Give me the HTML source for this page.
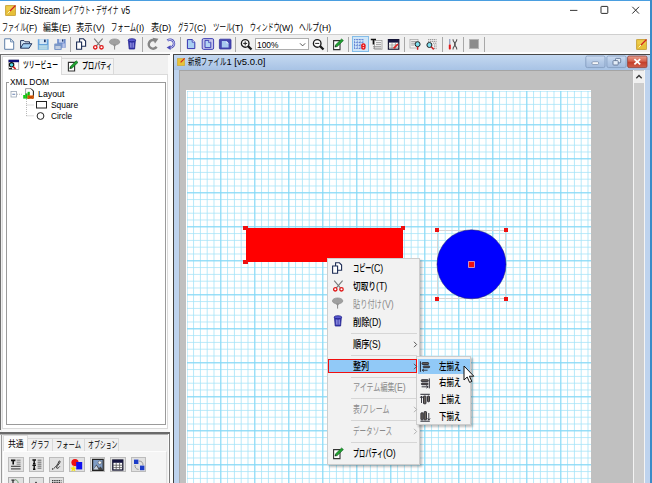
<!DOCTYPE html><html lang="ja"><head><meta charset="utf-8"><title>biz-Stream レイアウト・デザイナ v5</title><style>
html,body{margin:0;padding:0}body{width:652px;height:483px;overflow:hidden;position:relative;background:#f0f0f0;font-family:"Liberation Sans","Noto Sans CJK JP",sans-serif}
#w{position:absolute;left:0;top:0;width:652px;height:483px;overflow:hidden}
#w div,#w svg{position:absolute}
.t{position:absolute;white-space:pre;line-height:14px;height:14px}
.r{display:inline-block;height:14px;vertical-align:top;position:relative}
.r i{font-style:normal;position:absolute;left:0;top:0;transform-origin:0 50%;white-space:pre}
</style></head><body><div id="w">
<div style="left:0px;top:0px;width:652px;height:34px;background:#fff;"></div>
<div style="left:0px;top:0px;width:652px;height:1px;background:#4a9ee0;"></div>
<div style="left:0px;top:34px;width:652px;height:1px;background:#cfcfcf;"></div>
<div style="left:0px;top:35px;width:652px;height:17px;background:#f0f0f0;"></div>
<div style="left:0px;top:52px;width:652px;height:3px;background:#fcfcfc;"></div>
<div style="left:0px;top:53.5px;width:170.2px;height:1.3px;background:#707070;"></div>
<div style="left:172.9px;top:53.5px;width:478px;height:1.3px;background:#484848;"></div>
<svg style="left:5px;top:5px" width="11" height="11" viewBox="0 0 11 11"><rect x="0.3" y="0.3" width="10.4" height="10.4" rx="1.2" fill="#e6bf38" stroke="#b48c28" stroke-width="0.7"/><rect x="1.4" y="1.4" width="8.2" height="4" fill="#f0d050" opacity="0.8"/><path d="M5 6 L10.5 0.5" stroke="#d02020" stroke-width="1.3"/><path d="M2.6 8.4 L5 6" stroke="#fff6c0" stroke-width="1"/></svg>
<svg style="left:560px;top:0px" width="92" height="22" viewBox="0 0 92 22"><path d="M10 10.4 H17.4" stroke="#222" stroke-width="0.9"/><rect x="41" y="6.4" width="6.8" height="7" rx="0.6" fill="none" stroke="#222" stroke-width="0.95"/><path d="M72.3 6.8 L79 13.6 M79 6.8 L72.3 13.6" stroke="#222" stroke-width="0.95"/></svg>
<div style="left:0px;top:55px;width:1.4px;height:378px;background:#707070;"></div>
<div style="left:2px;top:55px;width:171px;height:428px;background:#f0f0f0;"></div>
<div style="left:2px;top:74px;width:166px;height:355px;background:#fff;border:1px solid #dadada;box-sizing:border-box"></div>
<div style="left:2px;top:55.5px;width:60px;height:19.5px;background:#fff;border:1px solid #dadada;border-bottom:none;box-sizing:border-box"></div>
<div style="left:62px;top:57.5px;width:52px;height:17px;background:#f4f4f4;border:1px solid #dadada;border-left:none;box-sizing:border-box"></div>
<div style="left:6px;top:82px;width:159.5px;height:343px;background:#fff;border:1px solid #9a9a9a;box-sizing:border-box;box-shadow:1px 1px 0 #fff, inset 1px 1px 0 #fff"></div>
<div style="left:9px;top:76px;width:41px;height:12px;background:#fff;"></div>
<svg style="left:8px;top:88px" width="44" height="34" viewBox="0 0 44 34"><path d="M9 6.25 H14.5 M18.5 11 V28 M18.5 17 H25.5 M18.5 27.8 H25.5" stroke="#a8a8a8" stroke-width="0.8" stroke-dasharray="1 1" fill="none"/><rect x="3" y="3.5" width="5.5" height="5.5" fill="#fff" stroke="#9aa5b5" stroke-width="0.8"/><path d="M4.3 6.25 H7.2" stroke="#4060a0" stroke-width="0.8"/><rect x="28.5" y="13.5" width="10" height="6.5" fill="#fff" stroke="#222" stroke-width="1"/><circle cx="32.5" cy="28" r="3.4" fill="#fff" stroke="#222" stroke-width="1"/></svg>
<div style="left:2px;top:429px;width:171px;height:4px;background:#f8f8f8;"></div>
<div style="left:0px;top:430px;width:1.4px;height:53px;background:#f4f4f4;"></div>
<div style="left:0px;top:432.4px;width:169.8px;height:1.4px;background:#6a6a6a;"></div>
<div style="left:0px;top:433.8px;width:169.8px;height:0.8px;background:#b0b0b0;"></div>
<div style="left:168.7px;top:433px;width:1px;height:50px;background:#8a8a8a;"></div>
<div style="left:1.2px;top:434.5px;width:1px;height:49px;background:#9a9a9a;"></div>
<div style="left:2.2px;top:434.5px;width:166.5px;height:49px;background:#f0f0f0;"></div>
<div style="left:3px;top:435.3px;width:25px;height:17px;background:#fbfbfb;border:1px solid #dcdcdc;border-bottom:none;box-sizing:border-box"></div>
<div style="left:28px;top:437.6px;width:25px;height:13.4px;background:#f0f0f0;border:1px solid #d8d8d8;border-left:none;border-bottom:none;box-sizing:border-box"></div>
<div style="left:53px;top:437.6px;width:31.5px;height:13.4px;background:#f0f0f0;border:1px solid #d8d8d8;border-left:none;border-bottom:none;box-sizing:border-box"></div>
<div style="left:84.5px;top:437.6px;width:34.8px;height:13.4px;background:#f0f0f0;border:1px solid #d8d8d8;border-left:none;border-bottom:none;box-sizing:border-box"></div>
<div style="left:3px;top:451px;width:164px;height:32px;background:#f5f5f5;border-top:1px solid #fdfdfd;border-left:1px solid #fdfdfd;border-right:1px solid #e0e0e0;box-sizing:border-box"></div>
<div style="left:8.1px;top:457.2px;width:15.5px;height:15.3px;background:#e1e1e1;border:1px solid #bcbcbc;box-sizing:border-box"></div>
<div style="left:28.5px;top:457.2px;width:15.5px;height:15.3px;background:#e1e1e1;border:1px solid #bcbcbc;box-sizing:border-box"></div>
<div style="left:48.9px;top:457.2px;width:15.5px;height:15.3px;background:#e1e1e1;border:1px solid #bcbcbc;box-sizing:border-box"></div>
<div style="left:69.4px;top:457.2px;width:15.5px;height:15.3px;background:#e1e1e1;border:1px solid #bcbcbc;box-sizing:border-box"></div>
<div style="left:89.8px;top:457.2px;width:15.5px;height:15.3px;background:#e1e1e1;border:1px solid #bcbcbc;box-sizing:border-box"></div>
<div style="left:110.3px;top:457.2px;width:15.5px;height:15.3px;background:#e1e1e1;border:1px solid #bcbcbc;box-sizing:border-box"></div>
<div style="left:130.7px;top:457.2px;width:15.5px;height:15.3px;background:#e1e1e1;border:1px solid #bcbcbc;box-sizing:border-box"></div>
<div style="left:8.1px;top:477.4px;width:15.5px;height:10px;background:#e1e1e1;border:1px solid #adadad;box-sizing:border-box"></div>
<div style="left:28.5px;top:477.4px;width:15.5px;height:10px;background:#e1e1e1;border:1px solid #adadad;box-sizing:border-box"></div>
<div style="left:48.9px;top:477.4px;width:15.5px;height:10px;background:#e1e1e1;border:1px solid #adadad;box-sizing:border-box"></div>
<svg style="left:8.1px;top:457.2px" width="15.5" height="15.3" viewBox="0 0 15.5 15.3"><path d="M3 3.4 H7.4 M5.2 3.4 V7.4" stroke="#111" stroke-width="1.6"/><path d="M8.6 3.2 H12.6 M8.6 5.2 H12.6 M8.6 7.2 H12.6" stroke="#777" stroke-width="0.9"/><path d="M3 9.4 H12.6 M3 11.8 H12.6" stroke="#555" stroke-width="1.3"/></svg>
<svg style="left:28.5px;top:457.2px" width="15.5" height="15.3" viewBox="0 0 15.5 15.3"><path d="M3.4 3 H7 M5.2 3 V6.4 M3.4 8.4 H7 M5.2 8.4 V12.2 M4 12.2 H6.4 M4 6.8 H6.4" stroke="#111" stroke-width="1.4"/><path d="M8.6 3.2 H12.4 M8.6 5.2 H12.4 M8.6 7.2 H12.4 M8.6 9.2 H12.4 M8.6 11.2 H12.4" stroke="#666" stroke-width="1"/></svg>
<svg style="left:48.9px;top:457.2px" width="15.5" height="15.3" viewBox="0 0 15.5 15.3"><path d="M4.6 11.6 C7 10 9.4 6.4 9.8 4.6 C10.2 3.2 11.6 4 10.8 5.6 C9.8 7.6 7.2 9.6 7.6 11 C8 12 10 10.6 10.8 9.4" fill="none" stroke="#222" stroke-width="0.9"/><circle cx="3.6" cy="12" r="0.7" fill="#222"/></svg>
<svg style="left:69.4px;top:457.2px" width="15.5" height="15.3" viewBox="0 0 15.5 15.3"><circle cx="6" cy="5.6" r="3.6" fill="#f01010"/><rect x="7.2" y="5" width="6" height="7.4" fill="#1010f0"/><path d="M4.4 8.4 L5.3 10.6 L7.6 10.8 L5.8 12.2 L6.4 14.4 L4.4 13.2 L2.4 14.4 L3 12.2 L1.2 10.8 L3.5 10.6 Z" fill="#f8e810"/></svg>
<svg style="left:89.8px;top:457.2px" width="15.5" height="15.3" viewBox="0 0 15.5 15.3"><rect x="2.6" y="2.4" width="10.6" height="11" fill="#7f9cc4" stroke="#222" stroke-width="1.2"/><circle cx="9.8" cy="5.6" r="1.7" fill="#f4f4f4" stroke="#444" stroke-width="0.5"/><path d="M2.8 13 L6.4 7.6 L9 11 L10.6 9.6 L13 13 Z" fill="#444"/><path d="M3.4 12.6 L6.4 8.6 L8.6 12.6 Z" fill="#c8d4e4"/></svg>
<svg style="left:110.3px;top:457.2px" width="15.5" height="15.3" viewBox="0 0 15.5 15.3"><rect x="2.8" y="3" width="10" height="10" fill="#fff" stroke="#151530" stroke-width="1.3"/><rect x="2.8" y="3" width="10" height="2.8" fill="#151540"/><path d="M2.8 8.2 H12.8 M2.8 10.6 H12.8 M6.2 5.8 V13 M9.6 5.8 V13" stroke="#555" stroke-width="0.8"/></svg>
<svg style="left:130.7px;top:457.2px" width="15.5" height="15.3" viewBox="0 0 15.5 15.3"><path d="M8 4 C11 4 12 6 12 8 M7.6 12.4 C4.6 12.4 4 10 4 8" fill="none" stroke="#999" stroke-width="1"/><rect x="3" y="2.6" width="4.4" height="4.4" fill="#1c3cc8"/><rect x="9" y="8.6" width="4.4" height="4.6" fill="#1c3cc8"/></svg>
<svg style="left:8.1px;top:477.4px" width="15.5" height="15.3" viewBox="0 0 15.5 15.3"><path d="M3.4 3.2 H6.6 M5 3.2 V8" stroke="#333" stroke-width="1.3"/><path d="M7 2.6 C9.6 3 10.4 5 10.4 8" stroke="#6a9a6a" stroke-width="1" fill="none"/></svg>
<svg style="left:28.5px;top:477.4px" width="15.5" height="15.3" viewBox="0 0 15.5 15.3"><path d="M7 4.6 L8.4 6.4 H5.6 Z" fill="#222"/></svg>
<svg style="left:48.9px;top:477.4px" width="15.5" height="15.3" viewBox="0 0 15.5 15.3"><path d="M3 3.6 H12.4 M3 5.6 H12.4" stroke="#333" stroke-width="1.1" stroke-dasharray="1.4 0.8"/></svg>
<div style="left:168.4px;top:55px;width:4.6px;height:428px;background:#fbfbfb;"></div>
<div style="left:168.6px;top:433px;width:1.1px;height:50px;background:#7a7a7a;"></div>
<div style="left:160px;top:432.4px;width:9.8px;height:1.4px;background:#6a6a6a;"></div>
<div style="left:172.9px;top:54.5px;width:1.4px;height:430px;background:#404040;"></div>
<div style="left:174.3px;top:54.8px;width:476px;height:430px;background:#bed3ee;"></div>
<div style="left:174.3px;top:54.8px;width:476px;height:15px;background:linear-gradient(#c4d8f0,#a8c3e5);"></div>
<div style="left:649.8px;top:54px;width:0.8px;height:430px;background:#9db6dc;"></div>
<div style="left:650.4px;top:0px;width:1.6px;height:483px;background:#3a8cc8;"></div>
<div style="left:179.4px;top:69.6px;width:453.8px;height:420px;background:#c0c0c0;border-top:1px solid #a4a4a4;border-left:1px solid #a8a8a8;box-sizing:border-box"></div>
<div style="left:633px;top:70.4px;width:11.7px;height:420px;background:#cdcdcd;border-left:1px solid #f4f4f4;border-right:1px solid #f4f4f4;box-sizing:border-box"></div>
<div style="left:634px;top:71px;width:10px;height:12px;background:#f0f0f0;"></div>
<svg style="left:634px;top:71px" width="10" height="12" viewBox="0 0 10 12"><path d="M2.3 7.2 L5 4.5 L7.7 7.2" stroke="#333" stroke-width="1.3" fill="none"/></svg>
<svg style="left:177.3px;top:58.2px" width="8" height="8" viewBox="0 0 11 11"><rect x="0.3" y="0.3" width="10.4" height="10.4" rx="1" fill="#e8c23a" stroke="#b8902a" stroke-width="0.6"/><path d="M5 6 L10.5 0.5" stroke="#d02020" stroke-width="1.5"/></svg>
<svg style="left:584px;top:55px" width="66" height="14" viewBox="0 0 66 14"><defs><linearGradient id="cb" x1="0" y1="0" x2="0" y2="1"><stop offset="0" stop-color="#cddcf1"/><stop offset="0.5" stop-color="#b3c9e6"/><stop offset="1" stop-color="#a3bbdd"/></linearGradient><linearGradient id="cr" x1="0" y1="0" x2="0" y2="1"><stop offset="0" stop-color="#eba391"/><stop offset="0.45" stop-color="#d4604c"/><stop offset="0.55" stop-color="#c4402c"/><stop offset="1" stop-color="#d0604c"/></linearGradient></defs><rect x="1.8" y="1" width="19.2" height="11.6" rx="1.6" fill="url(#cb)" stroke="#8099bd" stroke-width="0.8"/><rect x="8" y="6.8" width="6.6" height="2.6" rx="1" fill="#fff" stroke="#5a6f90" stroke-width="0.6"/><rect x="22.9" y="1" width="19.2" height="11.6" rx="1.6" fill="url(#cb)" stroke="#8099bd" stroke-width="0.8"/><rect x="31.5" y="3.4" width="5.2" height="4.4" rx="0.8" fill="#e4edf8" stroke="#55698a" stroke-width="0.8"/><rect x="29" y="5.6" width="5.2" height="4.4" rx="0.8" fill="#e4edf8" stroke="#55698a" stroke-width="0.8"/><rect x="43.6" y="1" width="19.4" height="11.6" rx="1.6" fill="url(#cr)" stroke="#8f4038" stroke-width="0.8"/><path d="M50.4 4.2 L56.2 9.4 M56.2 4.2 L50.4 9.4" stroke="#fff" stroke-width="1.8"/></svg>
<svg style="left:186px;top:90px" width="405" height="393" viewBox="0 0 405 393"><defs><pattern id="g1" x="0.3" y="0.3" width="6.8" height="6.8" patternUnits="userSpaceOnUse"><path d="M0 0 H6.8 M0 0 V6.8" stroke="#a4e3f8" stroke-width="1.6" fill="none"/></pattern><pattern id="g5" x="0.3" y="0.3" width="34.0" height="34.0" patternUnits="userSpaceOnUse"><path d="M0 0 H34.0 M0 0 V34.0" stroke="#82d7f6" stroke-width="1.8" fill="none"/></pattern></defs><rect width="405" height="393" fill="#fff"/><rect width="405" height="393" fill="url(#g1)"/><rect width="405" height="393" fill="url(#g5)"/><rect x="0" y="0" width="405" height="1" fill="#fff"/><rect x="0" y="0" width="1" height="393" fill="#fff"/></svg>
<div style="left:245.5px;top:228.2px;width:157.7px;height:33.5px;background:#ff0000;"></div>
<div style="left:243.2px;top:226.1px;width:4.4px;height:4.4px;background:#ee1010;"></div>
<div style="left:401.0px;top:226.1px;width:4.4px;height:4.4px;background:#ee1010;"></div>
<div style="left:243.2px;top:259.5px;width:4.4px;height:4.4px;background:#ee1010;"></div>
<div style="left:436.9px;top:229.8px;width:69.1px;height:69px;background:transparent;border:1px solid #d6d6d6;box-sizing:border-box"></div>
<svg style="left:436px;top:229px" width="72" height="72" viewBox="0 0 72 72"><circle cx="35.5" cy="35.3" r="34.5" fill="#0000ff" stroke="#202060" stroke-width="0.5"/></svg>
<div style="left:434.7px;top:227.6px;width:4.4px;height:4.4px;background:#ee1010;"></div>
<div style="left:503.8px;top:227.6px;width:4.4px;height:4.4px;background:#ee1010;"></div>
<div style="left:434.7px;top:296.5px;width:4.4px;height:4.4px;background:#ee1010;"></div>
<div style="left:503.8px;top:296.5px;width:4.4px;height:4.4px;background:#ee1010;"></div>
<div style="left:469.3px;top:262.2px;width:4.4px;height:4.4px;background:#ee1010;box-shadow:0 0 0 0.8px #ffb0b0"></div>
<div style="left:327.4px;top:258px;width:92.4px;height:206.6px;background:#f2f2f2;border:1px solid #cdcdcd;box-sizing:border-box;box-shadow:1.5px 1.5px 2px rgba(0,0,0,0.25)"></div>
<div style="left:351px;top:333.3px;width:66px;height:1px;background:#d6d6d6;"></div>
<div style="left:351px;top:355.0px;width:66px;height:1px;background:#d6d6d6;"></div>
<div style="left:351px;top:376.6px;width:66px;height:1px;background:#d6d6d6;"></div>
<div style="left:351px;top:398.3px;width:66px;height:1px;background:#d6d6d6;"></div>
<div style="left:351px;top:419.9px;width:66px;height:1px;background:#d6d6d6;"></div>
<div style="left:351px;top:441.6px;width:66px;height:1px;background:#d6d6d6;"></div>
<div style="left:415.8px;top:356.2px;width:55.6px;height:69px;background:#f2f2f2;border:1px solid #cdcdcd;box-sizing:border-box;box-shadow:1.5px 1.5px 2px rgba(0,0,0,0.25)"></div>
<div style="left:418px;top:358.7px;width:52px;height:15.8px;background:#91c9f7;"></div>
<div style="left:328.2px;top:358.7px;width:89.3px;height:14.7px;background:#91c9f7;border:1.7px solid #f01010;box-sizing:border-box"></div>
<svg style="left:412.6px;top:340.79999999999995px" width="5" height="7" viewBox="0 0 5 7"><path d="M1 0.8 L3.6 3.5 L1 6.2" stroke="#444" stroke-width="0.9" fill="none"/></svg>
<svg style="left:412.6px;top:362.5px" width="5" height="7" viewBox="0 0 5 7"><path d="M1 0.8 L3.6 3.5 L1 6.2" stroke="#444" stroke-width="0.9" fill="none"/></svg>
<svg style="left:412.6px;top:405.9px" width="5" height="7" viewBox="0 0 5 7"><path d="M1 0.8 L3.6 3.5 L1 6.2" stroke="#aaa" stroke-width="0.9" fill="none"/></svg>
<svg style="left:412.6px;top:427.59999999999997px" width="5" height="7" viewBox="0 0 5 7"><path d="M1 0.8 L3.6 3.5 L1 6.2" stroke="#aaa" stroke-width="0.9" fill="none"/></svg>
<div style="left:69.5px;top:36.5px;width:1px;height:15.5px;background:#a8a8a8;"></div>
<div style="left:141.8px;top:36.5px;width:1px;height:15.5px;background:#a8a8a8;"></div>
<div style="left:179.8px;top:36.5px;width:1px;height:15.5px;background:#a8a8a8;"></div>
<div style="left:235.0px;top:36.5px;width:1px;height:15.5px;background:#a8a8a8;"></div>
<div style="left:326.9px;top:36.5px;width:1px;height:15.5px;background:#a8a8a8;"></div>
<div style="left:348.3px;top:36.5px;width:1px;height:15.5px;background:#a8a8a8;"></div>
<div style="left:403.5px;top:36.5px;width:1px;height:15.5px;background:#a8a8a8;"></div>
<div style="left:441.6px;top:36.5px;width:1px;height:15.5px;background:#a8a8a8;"></div>
<div style="left:462.7px;top:36.5px;width:1px;height:15.5px;background:#a8a8a8;"></div>
<div style="left:483.9px;top:36.5px;width:1px;height:15.5px;background:#a8a8a8;"></div>
<svg style="left:3px;top:37px" width="13" height="14" viewBox="0 0 13 14"><path d="M1.7 1.8 H7.6 L10.7 4.9 V12.3 H1.7 Z" fill="#fff" stroke="#5f7fa8" stroke-width="1"/><path d="M7.6 1.8 V4.9 H10.7" fill="none" stroke="#5f7fa8" stroke-width="0.9"/></svg>
<svg style="left:19px;top:37px" width="14" height="14" viewBox="0 0 14 14"><path d="M1.6 11.2 V3.6 H5 L6 4.8 H10.5 V6.3" fill="#d8e8f8" stroke="#1c2c55" stroke-width="0.95"/><path d="M1.6 11.2 L4.2 6.7 H12.8 L10.1 11.2 Z" fill="#a4d0f4" stroke="#1c2c55" stroke-width="0.95" stroke-linejoin="round"/></svg>
<svg style="left:37px;top:38px" width="13" height="13" viewBox="0 0 13 13"><rect x="0.8" y="1.2" width="10.8" height="10.6" fill="#66a2dc"/><rect x="2.4" y="1.2" width="7.4" height="4.8" fill="#d4e6f6"/><rect x="7" y="1.6" width="1.7" height="2.6" fill="#1c3468"/><rect x="1.8" y="7" width="8.8" height="4.8" fill="#a9d0e2"/><path d="M2.6 8.6 H9.8 M2.6 10.2 H9.8" stroke="#c4e0ec" stroke-width="0.6"/></svg>
<svg style="left:53px;top:38px" width="14" height="13" viewBox="0 0 14 13"><rect x="4.2" y="1" width="8.4" height="8.8" fill="#6a8acc"/><rect x="5.8" y="1" width="5" height="3.6" fill="#c8d4ee"/><rect x="9" y="1.4" width="1.3" height="2.2" fill="#203a70"/><rect x="1.2" y="5.6" width="7.6" height="6.4" rx="1" fill="#7c98c8"/><rect x="2.4" y="8" width="5.2" height="3" fill="#c0cce0"/><rect x="9.4" y="5.4" width="2.4" height="4.4" fill="#b8c4e8"/></svg>
<svg style="left:75px;top:37px" width="13" height="14" viewBox="0 0 13 14"><path d="M4.6 1.8 H8.4 L10.6 4 V9.2 H4.6 Z" fill="#fff" stroke="#1c2c55" stroke-width="1.1"/><path d="M1.6 5 H6.6 V12.2 H1.6 Z" fill="#fff" stroke="#1c2c55" stroke-width="1.1"/></svg>
<svg style="left:92px;top:37px" width="13" height="14" viewBox="0 0 13 14"><path d="M2.2 1.6 L8.6 9.2 M10.6 1.6 L4.2 9.2" stroke="#7a7a7a" stroke-width="1.1" fill="none"/><circle cx="3.3" cy="10.3" r="1.7" fill="#fff" stroke="#e01818" stroke-width="1.3"/><circle cx="9.5" cy="10.3" r="1.7" fill="#fff" stroke="#e01818" stroke-width="1.3"/></svg>
<svg style="left:108px;top:38px" width="13" height="13" viewBox="0 0 13 13"><ellipse cx="6.6" cy="3.9" rx="5.2" ry="3" fill="#a0a0a0" stroke="#8a8a8a" stroke-width="0.6"/><path d="M4.6 6.4 L6.6 9 L8.6 6.4 Z" fill="#909090"/><path d="M6.6 8 V11.6" stroke="#888" stroke-width="1"/></svg>
<svg style="left:126px;top:37px" width="12" height="14" viewBox="0 0 12 14"><path d="M2.5 3.6 H9.3 L8.6 12 H3.2 Z" fill="#3a3ab0" stroke="#20208a" stroke-width="0.8"/><ellipse cx="5.9" cy="3.2" rx="3.8" ry="1.5" fill="#5a5ad0" stroke="#20208a" stroke-width="0.8"/><path d="M4.4 5.6 V10.6 M5.9 5.8 V10.8 M7.4 5.6 V10.6" stroke="#b0b0f0" stroke-width="0.7"/></svg>
<svg style="left:146px;top:37px" width="14" height="14" viewBox="0 0 14 14"><path d="M10.6 9.8 A4.3 4.3 0 1 1 8.8 3.4" fill="none" stroke="#858585" stroke-width="2.5"/><path d="M6.6 0.8 L12.4 1.8 L9 6.6 Z" fill="#858585"/></svg>
<svg style="left:164px;top:37px" width="13" height="14" viewBox="0 0 13 14"><path d="M3.4 3.6 A4 4 0 1 1 6.4 10.6" fill="none" stroke="#4a4ab8" stroke-width="2.4"/><path d="M3.4 3.6 A4 4 0 1 1 6.4 10.6" fill="none" stroke="#d8dcf6" stroke-width="0.9"/><path d="M6.6 8.2 L2.6 10.6 L6.6 13 Z" fill="#4a4ab8"/></svg>
<svg style="left:186px;top:38px" width="11" height="12" viewBox="0 0 11 12"><path d="M1.4 1.6 H6.2 L8.8 4.2 V10.6 H1.4 Z" fill="#a8cef2" stroke="#3434b0" stroke-width="1"/><path d="M6.2 1.6 V4.2 H8.8" fill="#e8f2fc" stroke="#3434b0" stroke-width="0.8"/></svg>
<svg style="left:201px;top:37px" width="14" height="14" viewBox="0 0 14 14"><rect x="1.2" y="1.6" width="11.4" height="10.8" rx="1.4" fill="#c4c4ea" stroke="#4444b4" stroke-width="1"/><path d="M4 3.4 H7.6 L9.8 5.6 V10.6 H4 Z" fill="#b4d4f4" stroke="#3434b0" stroke-width="0.9"/><path d="M7.6 3.4 V5.6 H9.8" fill="#e8f2fc" stroke="#3434b0" stroke-width="0.7"/></svg>
<svg style="left:218px;top:38px" width="14" height="12" viewBox="0 0 14 12"><rect x="1.4" y="1.2" width="11.6" height="9.8" rx="0.8" fill="#4646b0" stroke="#3434a0" stroke-width="0.8"/><path d="M3.8 3 H8.4 L10.6 5.2 V9.4 H3.8 Z" fill="#a8c8f0"/><path d="M8.4 3 V5.2 H10.6 Z" fill="#e8f0fc"/></svg>
<svg style="left:240px;top:38px" width="13" height="13" viewBox="0 0 13 13"><circle cx="5.2" cy="5.4" r="3.8" fill="#fff" stroke="#1a1a1a" stroke-width="1.35"/><path d="M3.2 5.4 H7.2 M5.2 3.4 V7.4" stroke="#222" stroke-width="1"/><path d="M8 8.2 L11.5 11.5" stroke="#1a1a1a" stroke-width="2.3"/></svg>
<div style="left:255px;top:37.6px;width:54px;height:12.8px;background:#fff;border:1px solid #adadad;box-sizing:border-box"></div>
<svg style="left:299px;top:42px" width="8" height="6" viewBox="0 0 8 6"><path d="M1 1.3 L3.6 3.9 L6.2 1.3" fill="none" stroke="#444" stroke-width="0.9"/></svg>
<svg style="left:312px;top:38px" width="13" height="13" viewBox="0 0 13 13"><circle cx="5.2" cy="5.4" r="3.8" fill="#fff" stroke="#1a1a1a" stroke-width="1.35"/><path d="M3.2 5.4 H7.2" stroke="#222" stroke-width="1"/><path d="M8 8.2 L11.5 11.5" stroke="#1a1a1a" stroke-width="2.3"/></svg>
<svg style="left:332px;top:37.5px" width="13" height="13" viewBox="0 0 13 13"><path d="M1.6 2.6 H8 V11.6 H1.6 Z" fill="#fff" stroke="#333" stroke-width="1.1"/><path d="M3 9 L3.6 6.8 L9.6 1 L11.4 2.6 L5.2 8.6 Z" fill="#20a030" stroke="#0a5a18" stroke-width="0.6"/><path d="M3 9 L3.4 7.4 L4.6 8.6 Z" fill="#222"/></svg>
<div style="left:351.8px;top:35.8px;width:17px;height:15.8px;background:#cfe6f8;border:1px solid #84bde9;box-sizing:border-box"></div>
<svg style="left:353px;top:38px" width="14" height="13" viewBox="0 0 14 13"><path d="M1.5 1.2 V11 M4.3 1.2 V11 M7.1 1.2 V11 M9.9 1.2 V11 M1.2 1.5 H10.4 M1.2 4.5 H10.4 M1.2 7.5 H10.4 M1.2 10.5 H10.4" stroke="#5a7ad0" stroke-width="0.9" stroke-dasharray="1 0.6" fill="none"/><rect x="8.2" y="5.2" width="4.4" height="6.6" rx="2.1" fill="#e81818"/><path d="M9.4 7.8 L10.4 6.6 L11.4 7.8 M9.4 9.2 L10.4 10.4 L11.4 9.2" fill="#fff"/></svg>
<svg style="left:370px;top:38px" width="13" height="13" viewBox="0 0 13 13"><rect x="4.6" y="2.4" width="7.4" height="8.8" fill="#f4f4f4" stroke="#9a9a9a" stroke-width="0.8"/><path d="M6 4.6 H11 M6 6.6 H11 M3 8.6 H11 M3 10.2 H11" stroke="#8a8a8a" stroke-width="0.8"/><path d="M0.8 1.6 H6 M3.4 1.6 V6.6" stroke="#111" stroke-width="1.5"/></svg>
<svg style="left:387px;top:38px" width="13" height="13" viewBox="0 0 13 13"><rect x="1.4" y="1.6" width="10.4" height="9.6" fill="#fff" stroke="#151530" stroke-width="1.2"/><rect x="1.4" y="1.6" width="10.4" height="3" fill="#151540"/><path d="M1.4 7 H11.8 M1.4 9.2 H11.8 M5 4.6 V11 M8.4 4.6 V11" stroke="#777" stroke-width="0.6"/><path d="M6.6 10.4 L11 6" stroke="#e02020" stroke-width="1.6"/></svg>
<svg style="left:409px;top:38px" width="13" height="13" viewBox="0 0 13 13"><rect x="1" y="1.6" width="8" height="8.4" fill="#f4f4f4" stroke="#a0a0a0" stroke-width="0.7"/><path d="M2.2 3.4 H7.6 M2.2 5.2 H6 M2.2 7 H5.4" stroke="#8a8a8a" stroke-width="0.8"/><circle cx="8.6" cy="6.2" r="2.5" fill="#7fe0f0" stroke="#222" stroke-width="1"/><path d="M8.6 8.8 V11.8" stroke="#d02020" stroke-width="1.4"/></svg>
<svg style="left:425px;top:38px" width="14" height="13" viewBox="0 0 14 13"><path d="M3 1.6 H11.6 M3 3.4 H11.6 M8 5.2 H11.6 M9 7 H11.6 M9 8.8 H11.6 M9 10.6 H11.6" stroke="#8a8a8a" stroke-width="0.9" stroke-dasharray="1.4 0.6"/><circle cx="4.4" cy="7" r="2.5" fill="#7fe0f0" stroke="#222" stroke-width="1"/><path d="M6.2 8.8 L8.8 11.4" stroke="#d02020" stroke-width="1.5"/></svg>
<svg style="left:447px;top:38px" width="12" height="13" viewBox="0 0 12 13"><path d="M2.8 1 V6.6" stroke="#6a7aa8" stroke-width="0.9"/><rect x="1.8" y="6.4" width="2" height="5" rx="0.6" fill="#e01818"/><path d="M6 1.2 C6 3.6 7 3.8 7.6 4.6 V7.8 C7 8.6 6 8.8 6 11.4 M9.8 1.2 C9.8 3.6 8.8 3.8 8.2 4.6 V7.8 C8.8 8.6 9.8 8.8 9.8 11.4" fill="none" stroke="#555" stroke-width="1.1"/></svg>
<div style="left:469px;top:39.1px;width:10.4px;height:9.7px;background:#8c8c8c;border:1px solid #b4b4b4;box-sizing:border-box"></div>
<svg style="left:636px;top:39px" width="11" height="11" viewBox="0 0 11 11"><rect x="0.3" y="0.3" width="10.4" height="10.4" rx="1.2" fill="#e6bf38" stroke="#b48c28" stroke-width="0.7"/><rect x="1.4" y="1.4" width="8.2" height="4" fill="#f0d050" opacity="0.8"/><path d="M5 6 L10.5 0.5" stroke="#d02020" stroke-width="1.3"/><path d="M2.6 8.4 L5 6" stroke="#fff6c0" stroke-width="1"/></svg>
<svg style="left:7.5px;top:59px" width="12" height="12" viewBox="0 0 12 12"><rect x="0.8" y="1" width="10" height="9.4" fill="#fff" stroke="#808080" stroke-width="0.6"/><rect x="0.6" y="0.8" width="10.4" height="2.4" fill="#10107a"/><circle cx="3.6" cy="5.8" r="2.2" fill="#50d8e8" stroke="#111" stroke-width="1.1"/><path d="M5.2 7.6 L7.6 10" stroke="#d01818" stroke-width="1.6"/><path d="M1 9.6 H4" stroke="#222" stroke-width="1.2"/></svg>
<svg style="left:66.5px;top:59.5px" width="12" height="12" viewBox="0 0 12 12"><path d="M1.4 2.4 H7.6 V11 H1.4 Z" fill="#fff" stroke="#333" stroke-width="1.1"/><path d="M2.8 8.6 L3.4 6.4 L9.2 0.8 L11 2.4 L5 8.2 Z" fill="#20a030" stroke="#0a5a18" stroke-width="0.6"/><path d="M2.8 8.6 L3.2 7 L4.4 8.2 Z" fill="#222"/></svg>
<svg style="left:23px;top:88px" width="12" height="11" viewBox="0 0 12 11"><path d="M2.6 0.6 H8 L10.4 3 V10 H2.6 Z" fill="#fff" stroke="#777" stroke-width="0.7"/><path d="M8 0.6 L10.4 3 V10" fill="none" stroke="#222" stroke-width="1"/><rect x="0.2" y="7" width="2.2" height="3.6" fill="#10d010"/><rect x="2.4" y="5.4" width="2.2" height="5.2" fill="#10c010"/><rect x="4.6" y="3.8" width="2.2" height="6.8" fill="#10b810"/><rect x="4.4" y="7.4" width="6.4" height="3.4" fill="#e86a10"/><path d="M5 8 L10 10.4 M10 8 L5 10.4" stroke="#a03000" stroke-width="0.6"/></svg>
<svg style="left:331.4px;top:261.3px" width="13" height="14" viewBox="0 0 13 14"><path d="M4.6 1.8 H8.4 L10.6 4 V9.2 H4.6 Z" fill="#fff" stroke="#1c2c55" stroke-width="1.1"/><path d="M1.6 5 H6.6 V12.2 H1.6 Z" fill="#fff" stroke="#1c2c55" stroke-width="1.1"/></svg>
<svg style="left:331.8px;top:278.7px" width="13" height="14" viewBox="0 0 13 14"><path d="M2.2 1.6 L8.6 9.2 M10.6 1.6 L4.2 9.2" stroke="#7a7a7a" stroke-width="1.1" fill="none"/><circle cx="3.3" cy="10.3" r="1.7" fill="#fff" stroke="#e01818" stroke-width="1.3"/><circle cx="9.5" cy="10.3" r="1.7" fill="#fff" stroke="#e01818" stroke-width="1.3"/></svg>
<svg style="left:331.3px;top:296.8px" width="13" height="13" viewBox="0 0 13 13"><ellipse cx="6.6" cy="3.9" rx="5.2" ry="3" fill="#a0a0a0" stroke="#8a8a8a" stroke-width="0.6"/><path d="M4.6 6.4 L6.6 9 L8.6 6.4 Z" fill="#909090"/><path d="M6.6 8 V11.6" stroke="#888" stroke-width="1"/></svg>
<svg style="left:332.4px;top:314.1px" width="12" height="14" viewBox="0 0 12 14"><path d="M2.5 3.6 H9.3 L8.6 12 H3.2 Z" fill="#3a3ab0" stroke="#20208a" stroke-width="0.8"/><ellipse cx="5.9" cy="3.2" rx="3.8" ry="1.5" fill="#5a5ad0" stroke="#20208a" stroke-width="0.8"/><path d="M4.4 5.6 V10.6 M5.9 5.8 V10.8 M7.4 5.6 V10.6" stroke="#b0b0f0" stroke-width="0.7"/></svg>
<svg style="left:331.6px;top:447.2px" width="13" height="13" viewBox="0 0 13 13"><path d="M1.6 2.6 H8 V11.6 H1.6 Z" fill="#fff" stroke="#333" stroke-width="1.1"/><path d="M3 9 L3.6 6.8 L9.6 1 L11.4 2.6 L5.2 8.6 Z" fill="#20a030" stroke="#0a5a18" stroke-width="0.6"/><path d="M3 9 L3.4 7.4 L4.6 8.6 Z" fill="#222"/></svg>
<svg style="left:419px;top:360px" width="13" height="14" viewBox="0 0 13 14"><path d="M1.4 1.4 V11.8" stroke="#262630" stroke-width="1"/><rect x="3" y="2.6" width="6.6" height="1.9" rx="0.6" fill="#6a645e" stroke="#262630" stroke-width="0.9"/><rect x="4.2" y="6" width="6.4" height="1.7" rx="0.6" fill="#6a645e" stroke="#262630" stroke-width="0.9"/><path d="M3.4 10.2 H8.6 M3.2 10.2 L5 8.9 M3.2 10.2 L5 11.5" stroke="#262630" stroke-width="0.9" fill="none"/></svg>
<svg style="left:419px;top:377px" width="13" height="14" viewBox="0 0 13 14"><path d="M10.3 1.4 V11.4" stroke="#262630" stroke-width="1"/><rect x="2.2" y="2.7" width="7" height="1.9" rx="0.6" fill="#6a645e" stroke="#262630" stroke-width="0.9"/><rect x="2.4" y="6.1" width="6.6" height="1.6" rx="0.6" fill="#6a645e" stroke="#262630" stroke-width="0.9"/><path d="M2.6 9.8 H9 M9.2 9.8 L7.4 8.5 M9.2 9.8 L7.4 11.1" stroke="#262630" stroke-width="0.9" fill="none"/></svg>
<svg style="left:419px;top:393px" width="13" height="14" viewBox="0 0 13 14"><path d="M1.4 1.3 H10.8" stroke="#262630" stroke-width="1"/><rect x="4.5" y="3" width="2.5" height="7.8" rx="0.6" fill="#6a645e" stroke="#262630" stroke-width="0.9"/><rect x="8.5" y="3" width="2" height="5.8" rx="0.6" fill="#6a645e" stroke="#262630" stroke-width="0.9"/><path d="M2.5 3.2 V10 M2.5 3 L1.2 4.8 M2.5 3 L3.8 4.8" stroke="#262630" stroke-width="0.9" fill="none"/></svg>
<svg style="left:419px;top:409px" width="13" height="14" viewBox="0 0 13 14"><path d="M1.4 12.2 H10.8" stroke="#262630" stroke-width="1"/><rect x="1.9" y="3.8" width="2.3" height="7" rx="0.6" fill="#6a645e" stroke="#262630" stroke-width="0.9"/><rect x="5" y="2.6" width="2.5" height="8.2" rx="0.6" fill="#6a645e" stroke="#262630" stroke-width="0.9"/><path d="M9.8 4 V11 M9.8 11.2 L8.5 9.4 M9.8 11.2 L11.1 9.4" stroke="#262630" stroke-width="0.9" fill="none"/></svg>
<svg style="left:462.8px;top:364.5px" width="12" height="19" viewBox="0 0 12 19"><path d="M1 1 V15 L4.2 12 L6.6 17.4 L8.8 16.4 L6.4 11.2 H10.8 Z" fill="#fff" stroke="#111" stroke-width="1" stroke-linejoin="round"/></svg>
<span class="t" style="left:19.6px;top:4px;font-size:10px;color:#000;font-weight:400;"><span class="r" style="width:42.43px"><i style="transform:scaleX(0.830)">biz-Stream </i></span><span class="r" style="width:56.49px"><i style="transform:scaleX(0.566)">レイアウト・デザイナ</i></span><span class="r" style="width:11.08px"><i style="transform:scaleX(0.830)"> v5</i></span></span>
<span class="t" style="left:2px;top:20.8px;font-size:9.7px;color:#000;font-weight:400;"><span class="r" style="width:24.16px"><i style="transform:scaleX(0.624)">ファイル</i></span><span class="r" style="width:11.14px"><i style="transform:scaleX(0.900)">(F)</i></span></span>
<span class="t" style="left:43px;top:20.8px;font-size:9.7px;color:#000;font-weight:400;"><span class="r" style="width:15.77px"><i style="transform:scaleX(0.814)">編集</i></span><span class="r" style="width:11.63px"><i style="transform:scaleX(0.900)">(E)</i></span></span>
<span class="t" style="left:76.1px;top:20.8px;font-size:9.7px;color:#000;font-weight:400;"><span class="r" style="width:16.57px"><i style="transform:scaleX(0.855)">表示</i></span><span class="r" style="width:11.63px"><i style="transform:scaleX(0.900)">(V)</i></span></span>
<span class="t" style="left:110.8px;top:20.8px;font-size:9.7px;color:#000;font-weight:400;"><span class="r" style="width:25.16px"><i style="transform:scaleX(0.654)">フォーム</i></span><span class="r" style="width:8.24px"><i style="transform:scaleX(0.900)">(I)</i></span></span>
<span class="t" style="left:151.2px;top:20.8px;font-size:9.7px;color:#000;font-weight:400;"><span class="r" style="width:8.19px"><i style="transform:scaleX(0.846)">表</i></span><span class="r" style="width:12.11px"><i style="transform:scaleX(0.900)">(D)</i></span></span>
<span class="t" style="left:178px;top:20.8px;font-size:9.7px;color:#000;font-weight:400;"><span class="r" style="width:16.09px"><i style="transform:scaleX(0.554)">グラフ</i></span><span class="r" style="width:12.11px"><i style="transform:scaleX(0.900)">(C)</i></span></span>
<span class="t" style="left:212.5px;top:20.8px;font-size:9.7px;color:#000;font-weight:400;"><span class="r" style="width:19.56px"><i style="transform:scaleX(0.673)">ツール</i></span><span class="r" style="width:11.14px"><i style="transform:scaleX(0.900)">(T)</i></span></span>
<span class="t" style="left:249.7px;top:20.8px;font-size:9.7px;color:#000;font-weight:400;"><span class="r" style="width:29.55px"><i style="transform:scaleX(0.610)">ウィンドウ</i></span><span class="r" style="width:14.05px"><i style="transform:scaleX(0.900)">(W)</i></span></span>
<span class="t" style="left:299.3px;top:20.8px;font-size:9.7px;color:#000;font-weight:400;"><span class="r" style="width:19.99px"><i style="transform:scaleX(0.688)">ヘルプ</i></span><span class="r" style="width:12.11px"><i style="transform:scaleX(0.900)">(H)</i></span></span>
<span class="t" style="left:22.5px;top:58px;font-size:9.3px;color:#000;font-weight:500;"><span class="r" style="width:35.00px"><i style="transform:scaleX(0.627)">ツリービュー</i></span></span>
<span class="t" style="left:82px;top:59px;font-size:9.3px;color:#000;font-weight:500;"><span class="r" style="width:30.00px"><i style="transform:scaleX(0.653)">プロパティ</i></span></span>
<span class="t" style="left:10px;top:74.8px;font-size:9.5px;color:#000;font-weight:400;"><span class="r" style="width:39.00px"><i style="transform:scaleX(0.887)">XML DOM</i></span></span>
<span class="t" style="left:38px;top:87.3px;font-size:9.5px;color:#000;font-weight:400;"><span class="r" style="width:26.40px"><i style="transform:scaleX(0.925)">Layout</i></span></span>
<span class="t" style="left:50.5px;top:98px;font-size:9.5px;color:#000;font-weight:400;"><span class="r" style="width:27.10px"><i style="transform:scaleX(0.884)">Square</i></span></span>
<span class="t" style="left:50.5px;top:109px;font-size:9.5px;color:#000;font-weight:400;"><span class="r" style="width:21.20px"><i style="transform:scaleX(0.873)">Circle</i></span></span>
<span class="t" style="left:8px;top:436.5px;font-size:9.5px;color:#000;font-weight:400;"><span class="r" style="width:15.75px"><i style="transform:scaleX(0.828)">共通</i></span></span>
<span class="t" style="left:31px;top:438px;font-size:9.5px;color:#000;font-weight:400;"><span class="r" style="width:18.50px"><i style="transform:scaleX(0.649)">グラフ</i></span></span>
<span class="t" style="left:56px;top:438px;font-size:9.5px;color:#000;font-weight:400;"><span class="r" style="width:25.00px"><i style="transform:scaleX(0.663)">フォーム</i></span></span>
<span class="t" style="left:88px;top:438px;font-size:9.5px;color:#000;font-weight:400;"><span class="r" style="width:29.50px"><i style="transform:scaleX(0.621)">オプション</i></span></span>
<span class="t" style="left:188px;top:55px;font-size:9.5px;color:#000;font-weight:400;"><span class="r" style="width:38.41px"><i style="transform:scaleX(0.674)">新規ファイル</i></span><span class="r" style="width:39.09px"><i style="transform:scaleX(1.000)">1 [v5.0.0]</i></span></span>
<span class="t" style="left:352.7px;top:262.2px;font-size:10.4px;color:#000;font-weight:500;"><span class="r" style="width:18.43px"><i style="transform:scaleX(0.591)">コピー</i></span><span class="r" style="width:12.27px"><i style="transform:scaleX(0.850)">(C)</i></span></span>
<span class="t" style="left:352.7px;top:280.0px;font-size:10.4px;color:#000;font-weight:500;"><span class="r" style="width:23.01px"><i style="transform:scaleX(0.738)">切取り</i></span><span class="r" style="width:11.29px"><i style="transform:scaleX(0.850)">(T)</i></span></span>
<span class="t" style="left:352.7px;top:297.7px;font-size:10.4px;color:#8a8a8a;font-weight:400;"><span class="r" style="width:28.82px"><i style="transform:scaleX(0.693)">貼り付け</i></span><span class="r" style="width:11.78px"><i style="transform:scaleX(0.850)">(V)</i></span></span>
<span class="t" style="left:352.7px;top:315.5px;font-size:10.4px;color:#000;font-weight:500;"><span class="r" style="width:16.63px"><i style="transform:scaleX(0.800)">削除</i></span><span class="r" style="width:12.27px"><i style="transform:scaleX(0.850)">(D)</i></span></span>
<span class="t" style="left:352.7px;top:337.9px;font-size:10.4px;color:#000;font-weight:500;"><span class="r" style="width:16.42px"><i style="transform:scaleX(0.790)">順序</i></span><span class="r" style="width:11.78px"><i style="transform:scaleX(0.850)">(S)</i></span></span>
<span class="t" style="left:352.7px;top:359.6px;font-size:10.4px;color:#000;font-weight:500;"><span class="r" style="width:16.20px"><i style="transform:scaleX(0.780)">整列</i></span></span>
<span class="t" style="left:352.7px;top:381.3px;font-size:10.4px;color:#8a8a8a;font-weight:400;"><span class="r" style="width:41.42px"><i style="transform:scaleX(0.676)">アイテム編集</i></span><span class="r" style="width:11.78px"><i style="transform:scaleX(0.850)">(E)</i></span></span>
<span class="t" style="left:352.7px;top:403.0px;font-size:10.4px;color:#8a8a8a;font-weight:400;"><span class="r" style="width:6.93px"><i style="transform:scaleX(0.667)">表</i></span><span class="r" style="width:2.46px"><i style="transform:scaleX(0.850)">/</i></span><span class="r" style="width:27.51px"><i style="transform:scaleX(0.667)">フレーム</i></span></span>
<span class="t" style="left:352.7px;top:424.7px;font-size:10.4px;color:#8a8a8a;font-weight:400;"><span class="r" style="width:39.00px"><i style="transform:scaleX(0.631)">データソース</i></span></span>
<span class="t" style="left:352.7px;top:446.8px;font-size:10.4px;color:#000;font-weight:500;"><span class="r" style="width:30.14px"><i style="transform:scaleX(0.587)">プロパティ</i></span><span class="r" style="width:12.76px"><i style="transform:scaleX(0.850)">(O)</i></span></span>
<span class="t" style="left:438.5px;top:360px;font-size:10.2px;color:#000;font-weight:500;"><span class="r" style="width:22.20px"><i style="transform:scaleX(0.726)">左揃え</i></span></span>
<span class="t" style="left:438.5px;top:376.4px;font-size:10.2px;color:#000;font-weight:500;"><span class="r" style="width:22.20px"><i style="transform:scaleX(0.726)">右揃え</i></span></span>
<span class="t" style="left:438.5px;top:393px;font-size:10.2px;color:#000;font-weight:500;"><span class="r" style="width:22.20px"><i style="transform:scaleX(0.726)">上揃え</i></span></span>
<span class="t" style="left:438.5px;top:409.5px;font-size:10.2px;color:#000;font-weight:500;"><span class="r" style="width:22.20px"><i style="transform:scaleX(0.726)">下揃え</i></span></span>
<span class="t" style="left:257.3px;top:37.9px;font-size:9.6px;color:#000;font-weight:400;"><span class="r" style="width:21.50px"><i style="transform:scaleX(0.876)">100%</i></span></span>
</div></body></html>
